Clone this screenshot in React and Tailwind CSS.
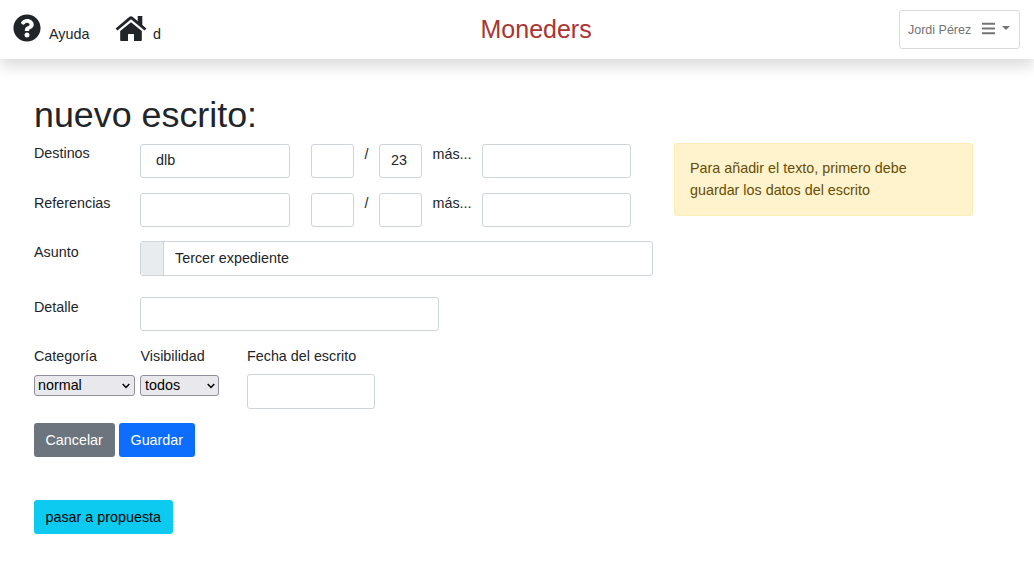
import { FaBars, FaQuestionCircle } from 'react-icons/fa';

function Field({ label, className, ...props }) {
  return (
    <input
      aria-label={label}
      className={`h-[34px] shrink-0 rounded-[3px] border border-[#ced4da] bg-white text-[#212529] outline-none ${className}`}
      {...props}
    />
  );
}

function ProtocolRow({ label, place = '', year = '', className, labelClassName }) {
  return (
    <div className={`flex h-[34px] items-start ${className}`}>
      <div className={`w-[106px] ${labelClassName}`}>{label}</div>
      <Field label={label} className="w-[150px] px-[15px] pb-0.5" defaultValue={place} />
      <Field label={`${label}: número`} className="ml-[21px] w-[43px] px-[11px]" />
      <div className="-mt-px w-[25px] pl-[10.5px]">/</div>
      <Field label={`${label}: año`} className="w-[43px] px-[11px] pb-0.5" defaultValue={year} />
      <div className="-mt-px w-[60px] pl-[10.5px]">más...</div>
      <Field label={`${label}: más`} className="w-[149px] px-[11px]" />
    </div>
  );
}

function HomeIcon({ className }) {
  return (
    <svg viewBox="0 0 32 28" className={className} fill="currentColor" aria-hidden="true">
      <path d="M1.500 15.500 15.400 3.900q.6-.5 1.200 0L30.500 15.500" fill="none" stroke="currentColor" strokeWidth="2.9" strokeLinejoin="round" />
      <path d="M22.700 2.500q0-.5.5-.5h3.600q.5 0 .5.5V12l-4.600-4z" />
      <path d="M16 8.200 26.800 17.100V26.200q0 .8-.8.8H19V20.500q0-.5-.5-.5h-5q-.5 0-.5.5V27H6q-.8 0-.8-.8V17.100z" />
    </svg>
  );
}

function Select({ label, value, className }) {
  return (
    <button
      type="button"
      aria-label={label}
      className={`flex h-[21px] items-center justify-between rounded-[3px] border border-[#8f8f9d] bg-[#e9e9ed] leading-[19px] text-black ${className}`}
    >
      <span>{value}</span>
      <svg width="8" height="6" viewBox="0 0 8 6" fill="none" stroke="currentColor" strokeWidth="1.5" className="mt-px">
        <path d="M.7 1 4 4.4 7.3 1" />
      </svg>
    </button>
  );
}

function Button({ children, className }) {
  return (
    <button type="button" className={`h-[34px] rounded-[3px] pl-[11.5px] text-left ${className}`}>
      {children}
    </button>
  );
}

function Header() {
  return (
    <header className="flex h-[59px] bg-white shadow-[0_7px_14px_rgba(0,0,0,0.15)]">
      <nav className="flex w-[480.5px] items-start pl-[13px]">
        <a className="flex w-[102px]">
          <FaQuestionCircle className="mt-3.5 size-7" />
          <span className="mt-[23px] ml-2">Ayuda</span>
        </a>
        <a className="flex">
          <HomeIcon className="mt-3.5 h-7 w-8" />
          <span className="mt-[23px] ml-1.5">d</span>
        </a>
      </nav>
      <h2 className="mt-3.5 text-[25px] leading-[30px] text-[#ab3431]">Moneders</h2>
      <button
        type="button"
        className="mt-2.5 mr-3.5 ml-auto flex h-[39px] w-[121px] items-center rounded-[3px] border border-[#dadada] pl-2 text-[12.5px] text-[#737373]"
      >
        <span className="w-[73px] text-left">Jordi Pérez</span>
        <FaBars className="-mt-0.5 size-[15px]" />
        <svg width="8" height="4" viewBox="0 0 8 4" className="-mt-[3px] ml-1.5 fill-current">
          <path d="M0 0h8L4 4z" />
        </svg>
      </button>
    </header>
  );
}

export default function App() {
  return (
    <div className="h-[565px] overflow-hidden bg-white font-['Liberation_Sans',Arial,sans-serif] text-[14.33px] leading-[22px] text-[#212529]">
      <Header />
      <main className="flex pt-[34px] pl-[34px]">
        <form className="w-[640px]">
          <h1 className="pt-px text-[35.85px] leading-[43px]">nuevo escrito:</h1>
          <ProtocolRow label="Destinos" place="dlb" year="23" className="mt-[7px]" labelClassName="-mt-0.5" />
          <ProtocolRow label="Referencias" className="mt-[15px]" labelClassName="-mt-px" />
          <div className="mt-3.5 flex">
            <label className="w-[106px]">Asunto</label>
            <div className="flex h-[35px] w-[513px] rounded-[3px] border border-[#ced4da]">
              <span className="w-[23px] border-r border-[#ced4da] bg-[#e9ecef]" />
              <input aria-label="Asunto" className="min-w-0 flex-1 px-[11px] pb-0.5 outline-none" defaultValue="Tercer expediente" />
            </div>
          </div>
          <div className="mt-[21px] flex items-start">
            <label className="-mt-px w-[106px]">Detalle</label>
            <Field label="Detalle" className="w-[299px] px-[11px]" />
          </div>
          <div className="mt-3.5 flex">
            <div className="w-[106px]">
              <div>Categoría</div>
              <Select label="Categoría" value="normal" className="mt-2 w-[101px] pr-1 pl-[3px]" />
            </div>
            <div className="w-[107px]">
              <div className="pl-[0.5px]">Visibilidad</div>
              <Select label="Visibilidad" value="todos" className="mt-2 w-[79px] pr-[3px] pl-1" />
            </div>
            <div className="flex h-16 flex-col">
              <div className="mb-[7px]">Fecha del escrito</div>
              <Field label="Fecha del escrito" className="h-[35px] w-[128px] px-[11px]" />
            </div>
          </div>
          <div className="mt-3.5 flex gap-1">
            <Button className="w-[81px] bg-[#6c757d] text-white">Cancelar</Button>
            <Button className="w-[76px] bg-[#0d6efd] text-white">Guardar</Button>
          </div>
          <Button className="mt-[43px] w-[139px] bg-[#0dcaf0] text-black">pasar a propuesta</Button>
        </form>
        <aside className="mt-[50px] h-[73px] w-[299px] rounded-[3px] border border-[#ffecb5] bg-[#fff3cd] px-[15px] pt-[13px] text-[#664d03]">
          Para añadir el texto, primero debe guardar los datos del escrito
        </aside>
      </main>
    </div>
  );
}
